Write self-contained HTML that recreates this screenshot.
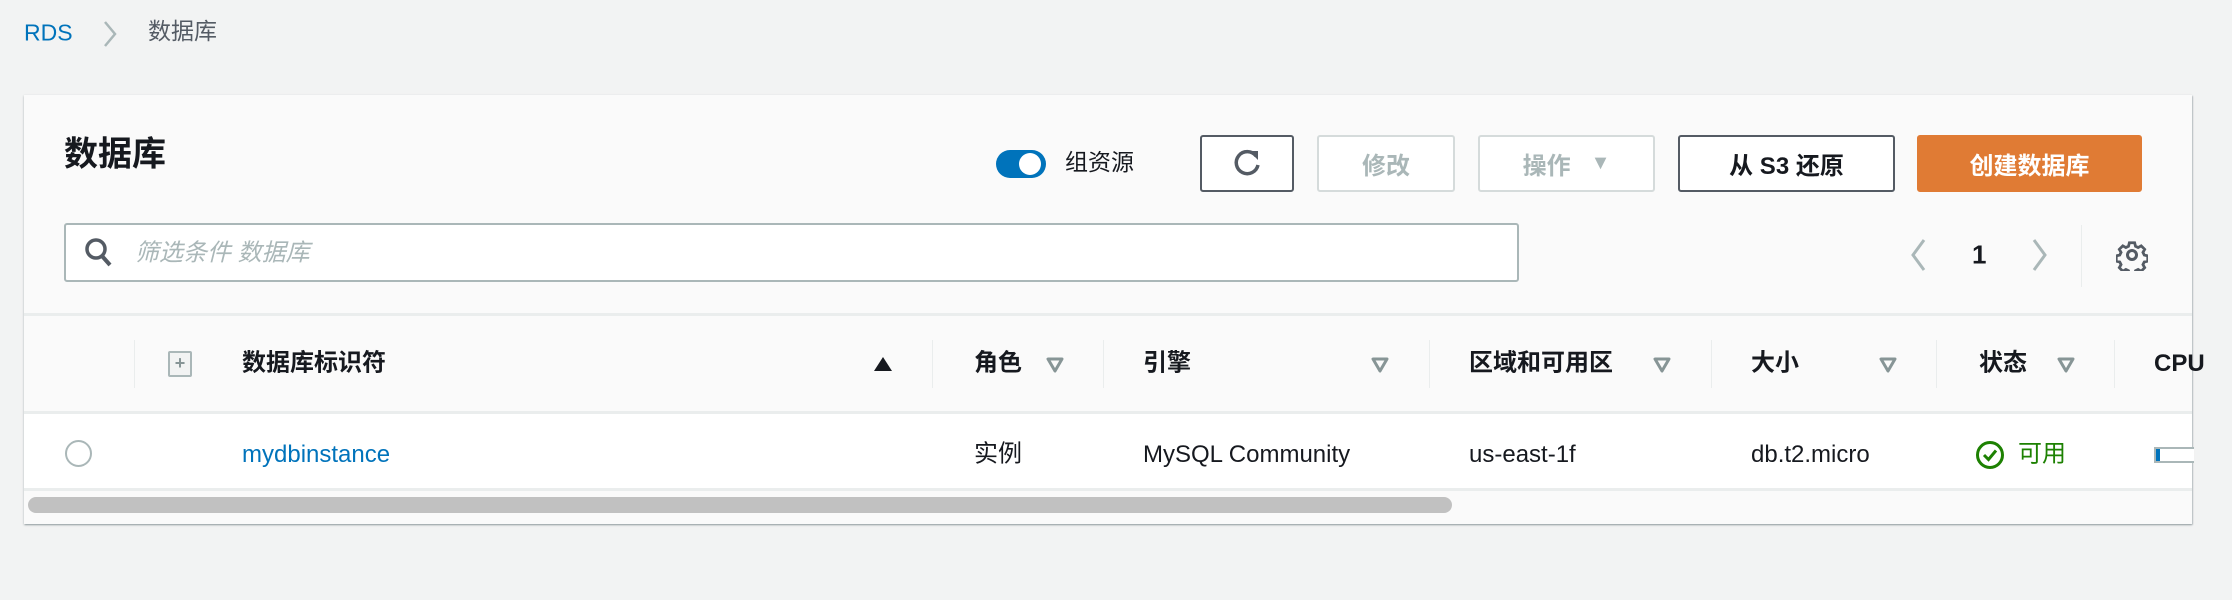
<!DOCTYPE html>
<html><head><meta charset="utf-8"><style>
*{box-sizing:border-box;margin:0;padding:0}
body{width:2232px;height:600px;background:#f2f3f3;position:relative;overflow:hidden;font-family:"Liberation Sans","Noto Sans CJK SC",sans-serif;color:#16191f}
.a{position:absolute;white-space:nowrap}
.c{transform:translateY(-50%)}
.k{margin-top:-4px}
.card{position:absolute;left:24px;top:95px;width:2168px;height:429px;background:#fafafa;box-shadow:0 1px 2px rgba(0,28,36,.3),1px 1px 1px rgba(0,28,36,.15);overflow:hidden}
.btn{position:absolute;top:135px;height:57px;border:2px solid #545b64;border-radius:3px;background:#fff;font-size:24px;font-weight:bold;display:flex;align-items:center;justify-content:center;color:#545b64}
.dis{border-color:#d5dbdb;color:#aab7b8}
.th{font-size:24px;font-weight:bold;color:#16191f}
.td{font-size:24px;color:#16191f}
.vl{position:absolute;top:340px;height:48px;width:1px;background:#eaeded}
.tri{position:absolute;top:356px}
</style></head><body>
<div class="a c" style="left:24px;top:33px;font-size:23px;color:#0073bb">RDS</div>
<svg class="a" style="left:102px;top:20px" width="16" height="28"><path d="M3 2 L13 14 L3 26" stroke="#aab7b8" stroke-width="2.5" fill="none"/></svg>
<div class="a c k" style="left:148px;top:33px;font-size:23px;color:#545b64">数据库</div>

<div class="card">
<div style="position:absolute;left:0;top:318px;width:100%;height:75px;background:#fff"></div>
<div style="position:absolute;left:0;top:218px;width:100%;height:3px;background:#eaeded"></div>
<div style="position:absolute;left:0;top:316px;width:100%;height:3px;background:#eaeded"></div>
<div style="position:absolute;left:0;top:393px;width:100%;height:3px;background:#eaeded"></div>
<div style="position:absolute;left:4px;top:402px;width:1424px;height:16px;border-radius:8px;background:#c1c1c1"></div>
</div>

<div class="a c k" style="left:64px;top:155px;font-size:34px;font-weight:bold">数据库</div>
<div class="a" style="left:996px;top:150px;width:50px;height:28px;border-radius:14px;background:#0073bb"></div>
<div class="a" style="left:1019px;top:153px;width:22px;height:22px;border-radius:50%;background:#fff"></div>
<div class="a c k" style="left:1065px;top:164px;font-size:23px">组资源</div>

<div class="btn" style="left:1200px;width:94px"><svg width="34" height="34" viewBox="0 0 34 34"><path d="M26 9 A11 11 0 1 0 28 18" stroke="#545b64" stroke-width="3.5" fill="none"/><path d="M19 4 L28 4 L28 13 Z" fill="#545b64"/></svg></div>
<div class="btn dis" style="left:1317px;width:138px">修改</div>
<div class="btn dis" style="left:1478px;width:177px">操作&nbsp;&nbsp;&nbsp;<span style="font-size:20px">▼</span></div>
<div class="btn" style="left:1678px;width:217px;color:#16191f">从 S3 还原</div>
<div class="btn" style="left:1917px;width:225px;background:#e07b34;border-color:#e07b34;color:#fff">创建数据库</div>

<div class="a" style="left:64px;top:223px;width:1455px;height:59px;border:2px solid #aab7b8;border-radius:3px;background:#fff"></div>
<svg class="a" style="left:84px;top:237px" width="30" height="32"><circle cx="12" cy="12" r="9" stroke="#545b64" stroke-width="3.5" fill="none"/><path d="M18 19 L26 28" stroke="#545b64" stroke-width="4"/></svg>
<div class="a c k" style="left:135px;top:254px;font-size:24px;color:#aab7b8;font-style:italic">筛选条件 数据库</div>

<svg class="a" style="left:1908px;top:238px" width="20" height="34"><path d="M16 2 L5 17 L16 32" stroke="#aab7b8" stroke-width="3" fill="none"/></svg>
<div class="a c" style="left:1972px;top:255px;font-size:26px;font-weight:bold">1</div>
<svg class="a" style="left:2030px;top:238px" width="20" height="34"><path d="M4 2 L15 17 L4 32" stroke="#aab7b8" stroke-width="3" fill="none"/></svg>
<div class="a" style="left:2081px;top:225px;width:1px;height:62px;background:#eaeded"></div>
<svg class="a" style="left:2116px;top:239px" width="32" height="32" viewBox="0 0 32 32"><path d="M13 2h6l1 4 3 1.5 3.5-2 4 4-2 3.5 1.5 3 4 1v6l-4 1-1.5 3 2 3.5-4 4-3.5-2-3 1.5-1 4h-6l-1-4-3-1.5-3.5 2-4-4 2-3.5-1.5-3-4-1v-6l4-1 1.5-3-2-3.5 4-4 3.5 2 3-1.5z" transform="translate(2 2) scale(.875)" stroke="#545b64" stroke-width="3.2" fill="none"/><circle cx="16" cy="16" r="4.5" stroke="#545b64" stroke-width="3" fill="none"/></svg>

<div class="vl" style="left:134px"></div>
<div class="vl" style="left:932px"></div>
<div class="vl" style="left:1103px"></div>
<div class="vl" style="left:1429px"></div>
<div class="vl" style="left:1711px"></div>
<div class="vl" style="left:1936px"></div>
<div class="vl" style="left:2114px"></div>

<div class="a" style="left:168px;top:351px;width:24px;height:26px;border:2px solid #aab7b8;border-radius:2px;background:#f2f3f3;color:#879596;font-size:18px;line-height:21px;text-align:center;font-weight:bold">+</div>
<div class="a c th k" style="left:242px;top:364px">数据库标识符</div>
<svg class="a" style="left:873px;top:356px" width="20" height="16"><path d="M10 1 L19 15 L1 15 Z" fill="#16191f"/></svg>
<div class="a c th k" style="left:974px;top:364px">角色</div>
<div class="a c th k" style="left:1143px;top:364px">引擎</div>
<div class="a c th k" style="left:1469px;top:364px">区域和可用区</div>
<div class="a c th k" style="left:1751px;top:364px">大小</div>
<div class="a c th k" style="left:1979px;top:364px">状态</div>
<div class="a c th" style="left:2154px;top:364px">CPU</div>
<svg class="tri" style="left:1045px" width="20" height="18"><path d="M3 3 L17 3 L10 15 Z" stroke="#879596" stroke-width="3" fill="none" stroke-linejoin="round"/></svg>
<svg class="tri" style="left:1370px" width="20" height="18"><path d="M3 3 L17 3 L10 15 Z" stroke="#879596" stroke-width="3" fill="none" stroke-linejoin="round"/></svg>
<svg class="tri" style="left:1652px" width="20" height="18"><path d="M3 3 L17 3 L10 15 Z" stroke="#879596" stroke-width="3" fill="none" stroke-linejoin="round"/></svg>
<svg class="tri" style="left:1878px" width="20" height="18"><path d="M3 3 L17 3 L10 15 Z" stroke="#879596" stroke-width="3" fill="none" stroke-linejoin="round"/></svg>
<svg class="tri" style="left:2056px" width="20" height="18"><path d="M3 3 L17 3 L10 15 Z" stroke="#879596" stroke-width="3" fill="none" stroke-linejoin="round"/></svg>

<div class="a" style="left:65px;top:440px;width:27px;height:27px;border:2px solid #aab7b8;border-radius:50%;background:#fff"></div>
<div class="a c td" style="left:242px;top:455px;color:#0073bb">mydbinstance</div>
<div class="a c td k" style="left:974px;top:455px">实例</div>
<div class="a c td" style="left:1143px;top:455px">MySQL Community</div>
<div class="a c td" style="left:1469px;top:455px">us-east-1f</div>
<div class="a c td" style="left:1751px;top:455px">db.t2.micro</div>
<svg class="a" style="left:1975px;top:440px" width="30" height="30"><circle cx="15" cy="15" r="12.5" stroke="#1d8102" stroke-width="3" fill="none"/><path d="M9 15 L13.5 19.5 L21 10.5" stroke="#1d8102" stroke-width="3" fill="none"/></svg>
<div class="a c td k" style="left:2018px;top:455px;color:#1d8102">可用</div>
<div class="a" style="left:2154px;top:447px;width:40px;height:16px;border:2px solid #aab7b8;border-right:none;background:#fff"></div>
<div class="a" style="left:2156px;top:449px;width:4px;height:12px;background:#0073bb"></div>
</body></html>
